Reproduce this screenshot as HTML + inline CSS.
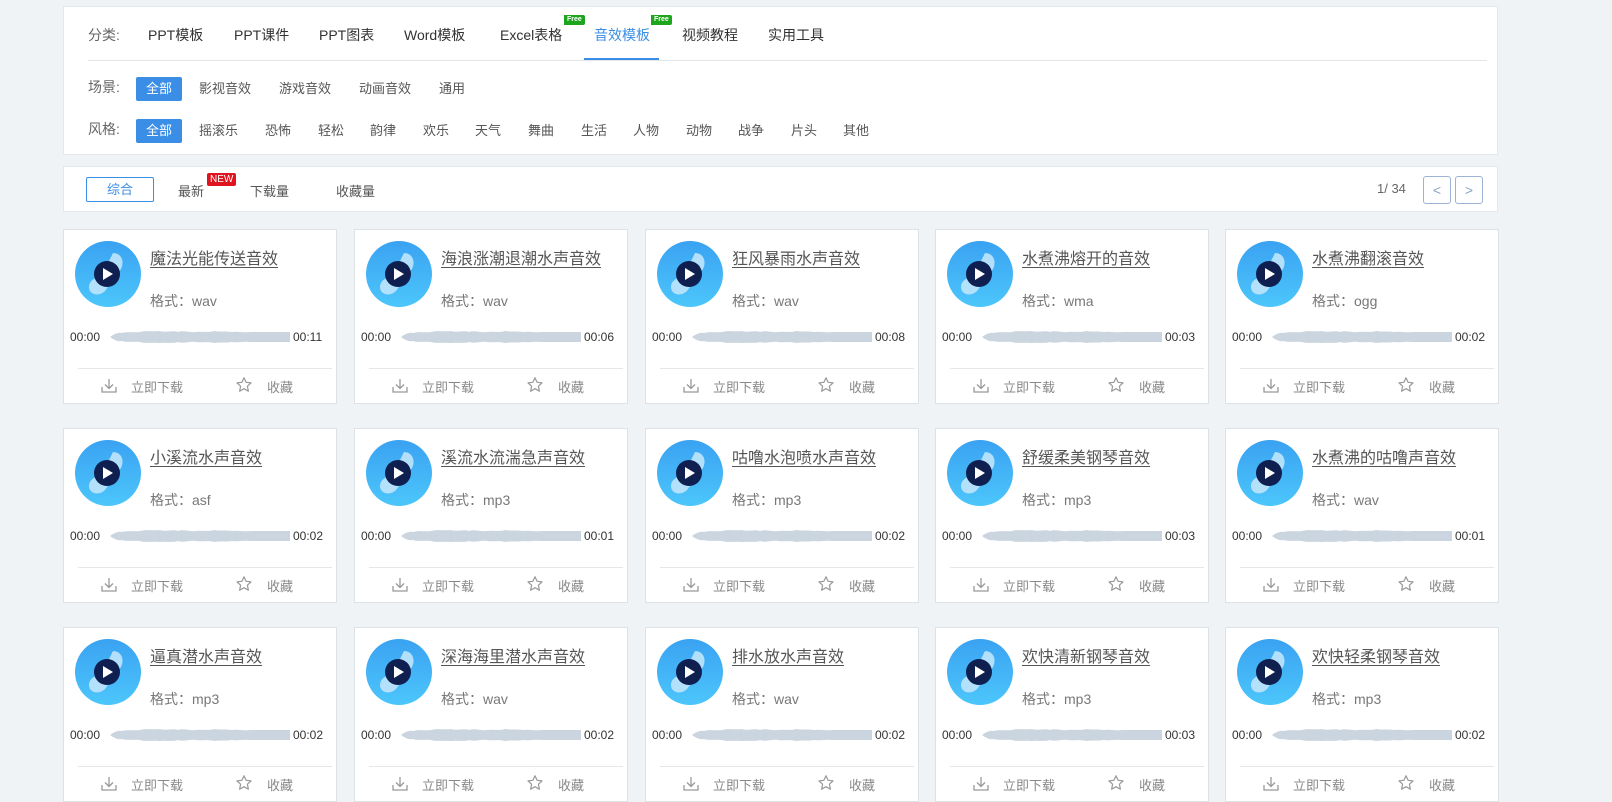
<!DOCTYPE html>
<html><head><meta charset="utf-8"><style>
*{margin:0;padding:0;box-sizing:border-box}
body{width:1612px;height:802px;background:#eff3f5;font-family:"Liberation Sans","Noto Sans CJK SC",sans-serif;position:relative;overflow:hidden;color:#333}
.panel{position:absolute;left:63px;top:6px;width:1435px;height:149px;background:#fff;border:1px solid #e3e8ec}
.row{position:absolute;left:24px;font-size:14px;white-space:nowrap}
.row span{display:inline-block;position:absolute;top:0}
.lbl{color:#666}
.hr{position:absolute;left:24px;right:10px;top:53px;height:1px;background:#e2e6ea}
.act{color:#3b8ee6}
.ul{position:absolute;left:520px;top:51px;width:75px;height:2px;background:#3b8ee6}
.free{position:absolute;background:#1ea51e;color:#fff;font-size:7px;font-weight:bold;padding:0 3px;height:10px;line-height:10px;border-radius:0 2px 2px 0}
.tag{position:absolute;top:-6px;height:24px;line-height:24px;padding:0 10px;font-size:13px;color:#555}
.tag.on{background:#3b8ee6;color:#fff;border-radius:2px}
.sort{position:absolute;left:63px;top:166px;width:1435px;height:46px;background:#fff;border:1px solid #e3e8ec}
.card{position:absolute;width:274px;height:175px;background:#fff;border:1px solid #dde2e6}
.ic{position:absolute;left:11px;top:11px;width:66px;height:66px}
.tt{position:absolute;left:86px;top:15px;font-size:16px;color:#555;text-decoration:underline;text-underline-offset:3px;white-space:nowrap}
.fm{position:absolute;left:86px;top:61px;font-size:14px;color:#777}
.t0,.t1{position:absolute;top:100px;font-size:12px;color:#333}
.t0{left:6px}.t1{left:229px}
.wv{position:absolute;left:40px;top:99px;width:186px;height:16px}
.dv{position:absolute;left:14px;right:4px;top:138px;height:1px;background:#e5e8ea}
.ft{position:absolute;top:147px;font-size:13px;color:#888}
</style></head><body>
<div class="panel">
 <div class="row" style="top:18px">
  <span class="lbl" style="left:0">分类:</span>
  <span style="left:60px">PPT模板</span>
  <span style="left:146px">PPT课件</span>
  <span style="left:231px">PPT图表</span>
  <span style="left:316px">Word模板</span>
  <span style="left:412px">Excel表格</span>
  <span class="act" style="left:506px">音效模板</span>
  <span style="left:594px">视频教程</span>
  <span style="left:680px">实用工具</span>
 </div>
 <div class="free" style="left:500px;top:8px">Free</div>
 <div class="free" style="left:587px;top:8px">Free</div>
 <div class="ul"></div>
 <div class="hr"></div>
 <div class="row" style="top:70px">
  <span class="lbl" style="left:0">场景:</span>
  <span class="tag on" style="left:48px">全部</span>
  <span class="tag" style="left:101px">影视音效</span>
  <span class="tag" style="left:181px">游戏音效</span>
  <span class="tag" style="left:261px">动画音效</span>
  <span class="tag" style="left:341px">通用</span>
 </div>
 <div class="row" style="top:112px">
  <span class="lbl" style="left:0">风格:</span>
  <span class="tag on" style="left:48px">全部</span>
  <span class="tag" style="left:101px">摇滚乐</span>
  <span class="tag" style="left:167px">恐怖</span>
  <span class="tag" style="left:220px">轻松</span>
  <span class="tag" style="left:272px">韵律</span>
  <span class="tag" style="left:325px">欢乐</span>
  <span class="tag" style="left:377px">天气</span>
  <span class="tag" style="left:430px">舞曲</span>
  <span class="tag" style="left:483px">生活</span>
  <span class="tag" style="left:535px">人物</span>
  <span class="tag" style="left:588px">动物</span>
  <span class="tag" style="left:640px">战争</span>
  <span class="tag" style="left:693px">片头</span>
  <span class="tag" style="left:745px">其他</span>
 </div>
</div>
<div class="sort">
 <div style="position:absolute;left:22px;top:10px;width:68px;height:25px;border:1px solid #3b8ee6;border-radius:2px;color:#3b8ee6;font-size:13px;text-align:center;line-height:23px">综合</div>
 <div style="position:absolute;left:114px;top:14px;font-size:13px;color:#555">最新</div>
 <div style="position:absolute;left:143px;top:6px;background:#e0141e;color:#fff;font-size:10px;padding:0 3px;height:13px;line-height:13px;border-radius:2px">NEW</div>
 <div style="position:absolute;left:186px;top:14px;font-size:13px;color:#555">下载量</div>
 <div style="position:absolute;left:272px;top:14px;font-size:13px;color:#555">收藏量</div>
 <div style="position:absolute;left:1313px;top:14px;font-size:13px;color:#666">1/ 34</div>
 <div style="position:absolute;left:1359px;top:9px;width:28px;height:28px;border:1px solid #9bb3d6;border-radius:3px;color:#8aa3c8;text-align:center;line-height:26px;font-size:14px">&lt;</div>
 <div style="position:absolute;left:1391px;top:9px;width:28px;height:28px;border:1px solid #9bb3d6;border-radius:3px;color:#8aa3c8;text-align:center;line-height:26px;font-size:14px">&gt;</div>
</div>
<svg width="0" height="0" style="position:absolute">
 <defs>
  <linearGradient id="g" x1="0" y1="0" x2="0" y2="1"><stop offset="0" stop-color="#3aa2f2"/><stop offset="1" stop-color="#4cc6fb"/></linearGradient>
  <symbol id="ico" viewBox="0 0 66 66">
   <circle cx="33" cy="33" r="33" fill="url(#g)"/>
   <path d="M38 12 C46 12 50 20 46 28 L30 50 C24 56 14 54 14 46 C14 40 20 36 26 36 Z" fill="#bfe4fb" opacity="0.9"/>
   <circle cx="32" cy="33" r="13" fill="#0f1f4f"/>
   <path d="M28 27 L38 33 L28 39 Z" fill="#fff"/>
  </symbol>
  <symbol id="wave" viewBox="0 0 186 16" preserveAspectRatio="none">
   <path d="M0 8 L6 8 C10 5 14 3 18 4 C24 2 30 4 36 3 C42 1 50 3 56 2 C62 4 68 1 74 3 C80 1 86 4 92 3 C98 2 104 4 110 2 C116 3 122 2 128 3 C134 2 140 4 146 3 C152 3 160 3 168 3 L186 3 L186 13 L168 13 C160 13 152 13 146 13 C140 12 134 14 128 13 C122 14 116 13 110 14 C104 12 98 14 92 13 C86 12 80 15 74 13 C68 15 62 13 56 14 C50 13 42 15 36 13 C30 12 24 14 18 12 C14 13 10 11 6 8 Z" fill="#cbd5df"/>
  </symbol>
  <symbol id="dl" viewBox="0 0 18 18"><path d="M9 2 V11 M5 7.5 L9 11.5 L13 7.5 M2 10 V15 H16 V10" fill="none" stroke="#999" stroke-width="1.3"/></symbol>
  <symbol id="st" viewBox="0 0 18 18"><path d="M9 1.8 L11.1 6.3 L16 6.9 L12.4 10.2 L13.4 15.2 L9 12.7 L4.6 15.2 L5.6 10.2 L2 6.9 L6.9 6.3 Z" fill="none" stroke="#999" stroke-width="1.2" stroke-linejoin="round"/></symbol>
 </defs>
</svg>

<div class="card" style="left:63px;top:229px"><svg class="ic"><use href="#ico"/></svg><div class="tt">魔法光能传送音效</div><div class="fm">格式：wav</div><div class="t0">00:00</div><svg class="wv"><use href="#wave"/></svg><div class="t1">00:11</div><div class="dv"></div><svg style="position:absolute;left:36px;top:147px;width:18px;height:18px"><use href="#dl"/></svg><div class="ft" style="left:67px">立即下载</div><svg style="position:absolute;left:171px;top:146px;width:18px;height:18px"><use href="#st"/></svg><div class="ft" style="left:203px">收藏</div></div>
<div class="card" style="left:354px;top:229px"><svg class="ic"><use href="#ico"/></svg><div class="tt">海浪涨潮退潮水声音效</div><div class="fm">格式：wav</div><div class="t0">00:00</div><svg class="wv"><use href="#wave"/></svg><div class="t1">00:06</div><div class="dv"></div><svg style="position:absolute;left:36px;top:147px;width:18px;height:18px"><use href="#dl"/></svg><div class="ft" style="left:67px">立即下载</div><svg style="position:absolute;left:171px;top:146px;width:18px;height:18px"><use href="#st"/></svg><div class="ft" style="left:203px">收藏</div></div>
<div class="card" style="left:645px;top:229px"><svg class="ic"><use href="#ico"/></svg><div class="tt">狂风暴雨水声音效</div><div class="fm">格式：wav</div><div class="t0">00:00</div><svg class="wv"><use href="#wave"/></svg><div class="t1">00:08</div><div class="dv"></div><svg style="position:absolute;left:36px;top:147px;width:18px;height:18px"><use href="#dl"/></svg><div class="ft" style="left:67px">立即下载</div><svg style="position:absolute;left:171px;top:146px;width:18px;height:18px"><use href="#st"/></svg><div class="ft" style="left:203px">收藏</div></div>
<div class="card" style="left:935px;top:229px"><svg class="ic"><use href="#ico"/></svg><div class="tt">水煮沸熔开的音效</div><div class="fm">格式：wma</div><div class="t0">00:00</div><svg class="wv"><use href="#wave"/></svg><div class="t1">00:03</div><div class="dv"></div><svg style="position:absolute;left:36px;top:147px;width:18px;height:18px"><use href="#dl"/></svg><div class="ft" style="left:67px">立即下载</div><svg style="position:absolute;left:171px;top:146px;width:18px;height:18px"><use href="#st"/></svg><div class="ft" style="left:203px">收藏</div></div>
<div class="card" style="left:1225px;top:229px"><svg class="ic"><use href="#ico"/></svg><div class="tt">水煮沸翻滚音效</div><div class="fm">格式：ogg</div><div class="t0">00:00</div><svg class="wv"><use href="#wave"/></svg><div class="t1">00:02</div><div class="dv"></div><svg style="position:absolute;left:36px;top:147px;width:18px;height:18px"><use href="#dl"/></svg><div class="ft" style="left:67px">立即下载</div><svg style="position:absolute;left:171px;top:146px;width:18px;height:18px"><use href="#st"/></svg><div class="ft" style="left:203px">收藏</div></div>

<div class="card" style="left:63px;top:428px"><svg class="ic"><use href="#ico"/></svg><div class="tt">小溪流水声音效</div><div class="fm">格式：asf</div><div class="t0">00:00</div><svg class="wv"><use href="#wave"/></svg><div class="t1">00:02</div><div class="dv"></div><svg style="position:absolute;left:36px;top:147px;width:18px;height:18px"><use href="#dl"/></svg><div class="ft" style="left:67px">立即下载</div><svg style="position:absolute;left:171px;top:146px;width:18px;height:18px"><use href="#st"/></svg><div class="ft" style="left:203px">收藏</div></div>
<div class="card" style="left:354px;top:428px"><svg class="ic"><use href="#ico"/></svg><div class="tt">溪流水流湍急声音效</div><div class="fm">格式：mp3</div><div class="t0">00:00</div><svg class="wv"><use href="#wave"/></svg><div class="t1">00:01</div><div class="dv"></div><svg style="position:absolute;left:36px;top:147px;width:18px;height:18px"><use href="#dl"/></svg><div class="ft" style="left:67px">立即下载</div><svg style="position:absolute;left:171px;top:146px;width:18px;height:18px"><use href="#st"/></svg><div class="ft" style="left:203px">收藏</div></div>
<div class="card" style="left:645px;top:428px"><svg class="ic"><use href="#ico"/></svg><div class="tt">咕噜水泡喷水声音效</div><div class="fm">格式：mp3</div><div class="t0">00:00</div><svg class="wv"><use href="#wave"/></svg><div class="t1">00:02</div><div class="dv"></div><svg style="position:absolute;left:36px;top:147px;width:18px;height:18px"><use href="#dl"/></svg><div class="ft" style="left:67px">立即下载</div><svg style="position:absolute;left:171px;top:146px;width:18px;height:18px"><use href="#st"/></svg><div class="ft" style="left:203px">收藏</div></div>
<div class="card" style="left:935px;top:428px"><svg class="ic"><use href="#ico"/></svg><div class="tt">舒缓柔美钢琴音效</div><div class="fm">格式：mp3</div><div class="t0">00:00</div><svg class="wv"><use href="#wave"/></svg><div class="t1">00:03</div><div class="dv"></div><svg style="position:absolute;left:36px;top:147px;width:18px;height:18px"><use href="#dl"/></svg><div class="ft" style="left:67px">立即下载</div><svg style="position:absolute;left:171px;top:146px;width:18px;height:18px"><use href="#st"/></svg><div class="ft" style="left:203px">收藏</div></div>
<div class="card" style="left:1225px;top:428px"><svg class="ic"><use href="#ico"/></svg><div class="tt">水煮沸的咕噜声音效</div><div class="fm">格式：wav</div><div class="t0">00:00</div><svg class="wv"><use href="#wave"/></svg><div class="t1">00:01</div><div class="dv"></div><svg style="position:absolute;left:36px;top:147px;width:18px;height:18px"><use href="#dl"/></svg><div class="ft" style="left:67px">立即下载</div><svg style="position:absolute;left:171px;top:146px;width:18px;height:18px"><use href="#st"/></svg><div class="ft" style="left:203px">收藏</div></div>

<div class="card" style="left:63px;top:627px"><svg class="ic"><use href="#ico"/></svg><div class="tt">逼真潜水声音效</div><div class="fm">格式：mp3</div><div class="t0">00:00</div><svg class="wv"><use href="#wave"/></svg><div class="t1">00:02</div><div class="dv"></div><svg style="position:absolute;left:36px;top:147px;width:18px;height:18px"><use href="#dl"/></svg><div class="ft" style="left:67px">立即下载</div><svg style="position:absolute;left:171px;top:146px;width:18px;height:18px"><use href="#st"/></svg><div class="ft" style="left:203px">收藏</div></div>
<div class="card" style="left:354px;top:627px"><svg class="ic"><use href="#ico"/></svg><div class="tt">深海海里潜水声音效</div><div class="fm">格式：wav</div><div class="t0">00:00</div><svg class="wv"><use href="#wave"/></svg><div class="t1">00:02</div><div class="dv"></div><svg style="position:absolute;left:36px;top:147px;width:18px;height:18px"><use href="#dl"/></svg><div class="ft" style="left:67px">立即下载</div><svg style="position:absolute;left:171px;top:146px;width:18px;height:18px"><use href="#st"/></svg><div class="ft" style="left:203px">收藏</div></div>
<div class="card" style="left:645px;top:627px"><svg class="ic"><use href="#ico"/></svg><div class="tt">排水放水声音效</div><div class="fm">格式：wav</div><div class="t0">00:00</div><svg class="wv"><use href="#wave"/></svg><div class="t1">00:02</div><div class="dv"></div><svg style="position:absolute;left:36px;top:147px;width:18px;height:18px"><use href="#dl"/></svg><div class="ft" style="left:67px">立即下载</div><svg style="position:absolute;left:171px;top:146px;width:18px;height:18px"><use href="#st"/></svg><div class="ft" style="left:203px">收藏</div></div>
<div class="card" style="left:935px;top:627px"><svg class="ic"><use href="#ico"/></svg><div class="tt">欢快清新钢琴音效</div><div class="fm">格式：mp3</div><div class="t0">00:00</div><svg class="wv"><use href="#wave"/></svg><div class="t1">00:03</div><div class="dv"></div><svg style="position:absolute;left:36px;top:147px;width:18px;height:18px"><use href="#dl"/></svg><div class="ft" style="left:67px">立即下载</div><svg style="position:absolute;left:171px;top:146px;width:18px;height:18px"><use href="#st"/></svg><div class="ft" style="left:203px">收藏</div></div>
<div class="card" style="left:1225px;top:627px"><svg class="ic"><use href="#ico"/></svg><div class="tt">欢快轻柔钢琴音效</div><div class="fm">格式：mp3</div><div class="t0">00:00</div><svg class="wv"><use href="#wave"/></svg><div class="t1">00:02</div><div class="dv"></div><svg style="position:absolute;left:36px;top:147px;width:18px;height:18px"><use href="#dl"/></svg><div class="ft" style="left:67px">立即下载</div><svg style="position:absolute;left:171px;top:146px;width:18px;height:18px"><use href="#st"/></svg><div class="ft" style="left:203px">收藏</div></div>
</body></html>
